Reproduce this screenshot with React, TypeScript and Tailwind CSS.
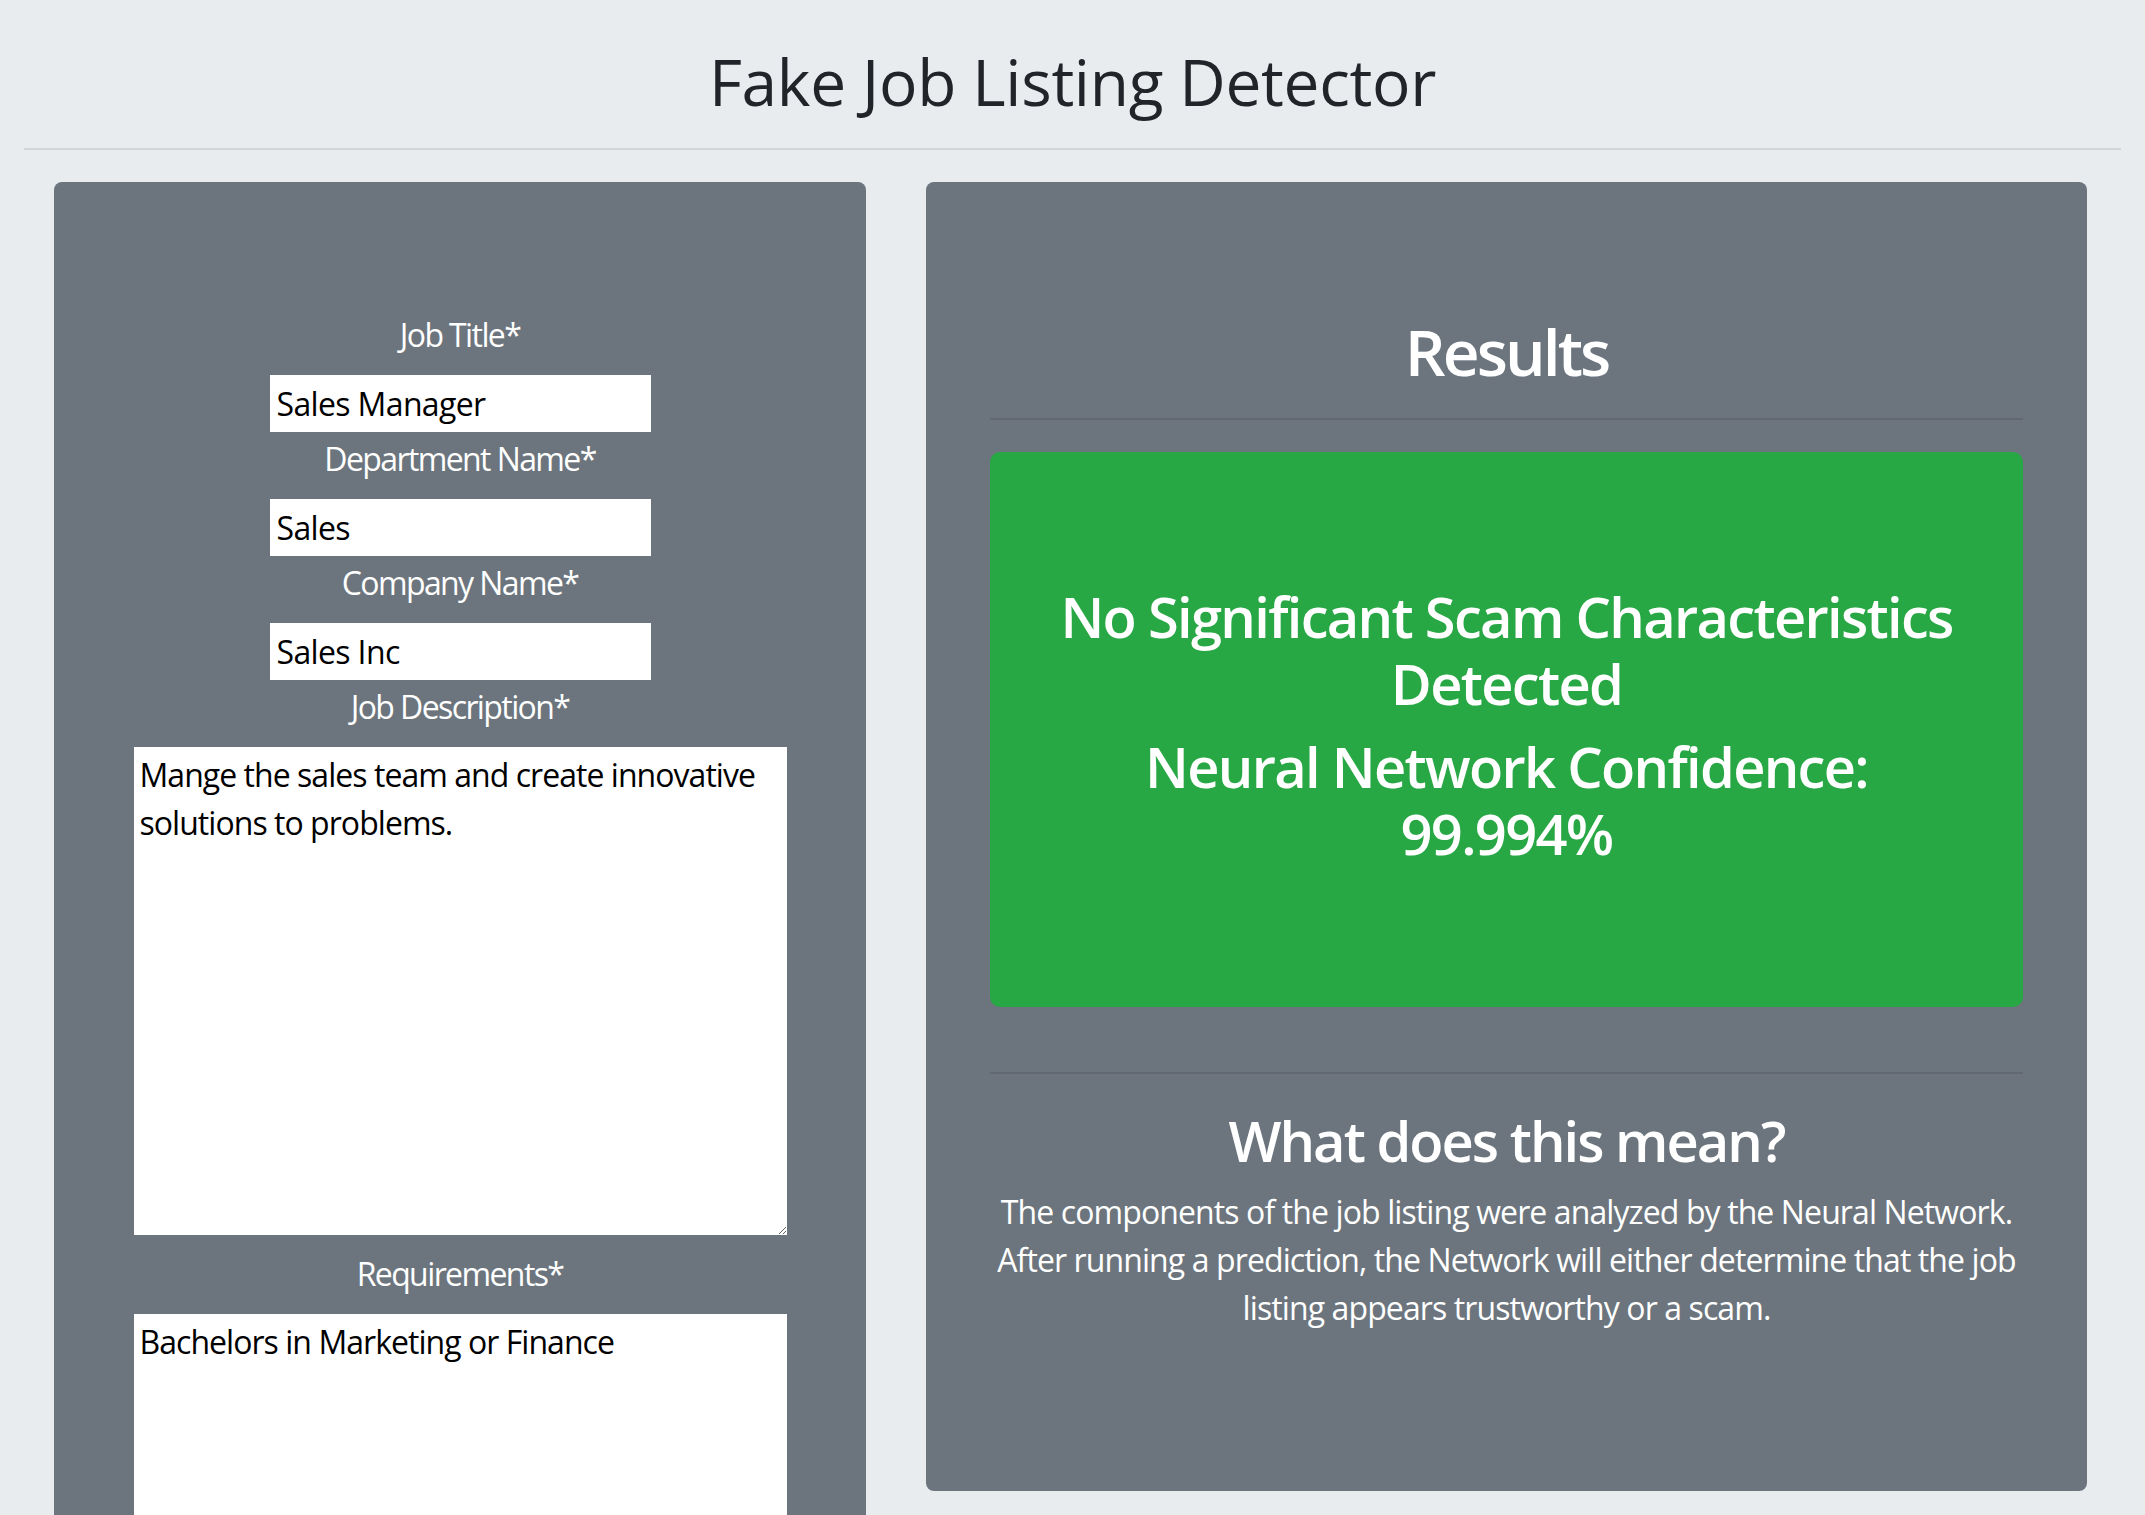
const fields = [
  { label: "Job Title*", value: "Sales Manager" },
  { label: "Department Name*", value: "Sales" },
  { label: "Company Name*", value: "Sales Inc" },
]

export default function App() {
  return (
    <div className="min-h-screen bg-[#e9ecef] font-['Open_Sans',sans-serif] tracking-[-0.04em] text-[#212529]">
      <header className="px-6 pt-[44px]">
        <h1 className="text-center text-[64px] font-medium leading-[1.2] tracking-[-0.005em]">Fake Job Listing Detector</h1>
        <hr className="mt-[27px] border-t-2 border-[#d2d5d8]" />
      </header>

      <main className="flex items-start gap-[60px] pl-[54px] pr-[58px] pt-8">
        <form className="flex w-[812px] shrink-0 flex-col items-center rounded-lg bg-[#6c757d] pt-[129px] pb-10 text-white">
          {fields.map((field) => (
            <div key={field.label} className="flex flex-col items-center">
              <label className="mb-4 text-[32px] leading-[48px] tracking-[-0.05em]">{field.label}</label>
              <input
                type="text"
                defaultValue={field.value}
                className="mb-[3px] h-[57px] w-[381px] bg-white pl-[7px] text-[32px] text-black outline-none"
              />
            </div>
          ))}

          <label className="mb-4 text-[32px] leading-[48px] tracking-[-0.05em]">Job Description*</label>
          <textarea
            defaultValue="Mange the sales team and create innovative solutions to problems."
            className="mb-[15px] block h-[488px] w-[653px] bg-white px-[6px] py-1 text-[32px] leading-[48px] tracking-[-0.03em] text-black outline-none"
          />

          <label className="mb-4 text-[32px] leading-[48px] tracking-[-0.05em]">Requirements*</label>
          <textarea
            defaultValue="Bachelors in Marketing or Finance"
            className="block h-[488px] w-[653px] bg-white px-[6px] py-1 text-[32px] leading-[48px] tracking-[-0.03em] text-black outline-none"
          />
        </form>

        <section className="flex-1 rounded-lg bg-[#6c757d] px-16 pt-[132px] pb-[159px] text-center text-white">
          <h2 className="mb-[27px] text-[64px] font-semibold leading-[1.2] tracking-[-0.045em]">Results</h2>
          <hr className="border-t-2 border-[#61686f]" />

          <div className="mt-8 h-[555px] rounded-[10px] bg-[#28a745] px-10 pt-[131px]">
            <h3 className="mb-4 text-[56px] font-semibold leading-[1.2] tracking-[-0.03em]">
              No Significant Scam Characteristics Detected
            </h3>
            <h3 className="text-[56px] font-semibold leading-[1.2] tracking-[-0.03em]">
              Neural Network Confidence:
              <br />
              99.994%
            </h3>
          </div>

          <hr className="mt-[65px] border-t-2 border-[#61686f]" />

          <h3 className="mt-[33px] mb-[14px] text-[56px] font-semibold leading-[1.2] tracking-[-0.035em]">What does this mean?</h3>
          <p className="text-[32px] leading-[48px] tracking-[-0.028em]">
            <span className="block whitespace-nowrap">The components of the job listing were analyzed by the Neural Network.</span>
            <span className="block whitespace-nowrap">After running a prediction, the Network will either determine that the job</span>
            <span className="block whitespace-nowrap">listing appears trustworthy or a scam.</span>
          </p>
        </section>
      </main>
    </div>
  )
}
